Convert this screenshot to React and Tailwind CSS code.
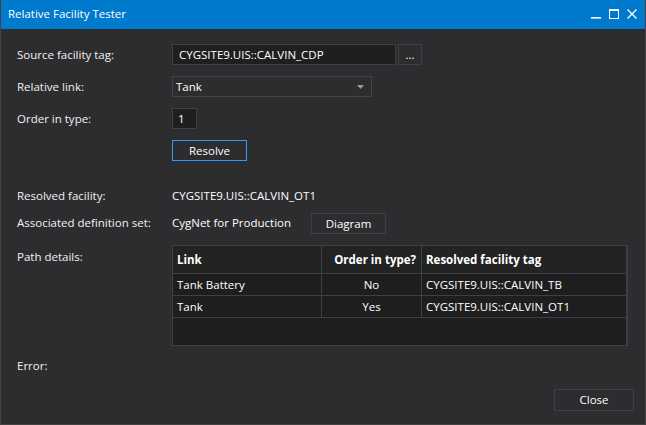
import React from "react";

const font = { fontFamily: '"Open Sans", "Noto Sans", sans-serif' };

export default function App() {
  return (
    <div
      className="w-[646px] h-[425px] bg-[#2d2d30] text-[#f1f1f1] text-[11.5px] flex flex-col border border-t-0 border-[#434346] overflow-hidden"
      style={font}
    >
      {/* Title bar */}
      <div className="h-[29px] shrink-0 bg-[#007acc] flex items-center pl-[8px] pr-[9px] -mx-px">
        <span className="text-white text-[11.5px] leading-none pb-[2px]">Relative Facility Tester</span>
        <div className="ml-auto flex items-center gap-[8px] pb-[1px]">
          <svg width="10" height="10" viewBox="0 0 10 10">
            <rect x="0" y="8" width="10" height="1.6" fill="white" />
          </svg>
          <svg width="10" height="10" viewBox="0 0 10 10">
            <rect x="0.5" y="0.5" width="9" height="9" fill="none" stroke="white" strokeWidth="1" />
            <rect x="0" y="0" width="10" height="2" fill="white" />
          </svg>
          <svg width="10" height="10" viewBox="0 0 10 10">
            <path d="M0.5 0.5 L9.5 9.5 M9.5 0.5 L0.5 9.5" stroke="white" strokeWidth="1.3" />
          </svg>
        </div>
      </div>

      <div className="flex flex-col pl-[16px] pr-[17px] pt-[15px] flex-1">
        {/* Source facility tag */}
        <div className="flex items-center h-[21px]">
          <div className="w-[155px] shrink-0">Source facility tag:</div>
          <div className="w-[224px] h-[21px] bg-[#1f1f1f] border border-[#3f3f46] flex items-center px-[6px] text-white">
            CYGSITE9.UIS::CALVIN_CDP
          </div>
          <div className="w-[24px] h-[21px] ml-[2px] border border-[#3f3f46] flex items-center justify-center text-white leading-none pt-[1px]">
            ...
          </div>
        </div>

        {/* Relative link */}
        <div className="flex items-center h-[21px] mt-[11px]">
          <div className="w-[155px] shrink-0">Relative link:</div>
          <div className="w-[200px] h-[21px] bg-[#2d2d30] border border-[#434346] flex items-center pl-[3px] pr-[7px] text-white">
            <span>Tank</span>
            <svg className="ml-auto" width="7" height="4" viewBox="0 0 7 4">
              <path d="M0 0 L7 0 L3.5 4 Z" fill="#999999" />
            </svg>
          </div>
        </div>

        {/* Order in type */}
        <div className="flex items-center h-[21px] mt-[11px]">
          <div className="w-[155px] shrink-0">Order in type:</div>
          <div className="w-[25px] h-[21px] bg-[#1f1f1f] border border-[#3f3f46] flex items-center px-[5px] text-white">
            1
          </div>
        </div>

        {/* Resolve */}
        <div className="flex items-center h-[21px] mt-[11px]">
          <div className="w-[155px] shrink-0"></div>
          <div className="w-[75px] h-[21px] border border-[#3399ff] flex items-center justify-center text-white">
            Resolve
          </div>
        </div>

        {/* Resolved facility */}
        <div className="flex items-center h-[20px] mt-[25px]">
          <div className="w-[155px] shrink-0">Resolved facility:</div>
          <div className="text-white">CYGSITE9.UIS::CALVIN_OT1</div>
        </div>

        {/* Associated definition set */}
        <div className="flex items-start h-[21px] mt-[7px]">
          <div className="w-[155px] shrink-0 pt-[1px]">Associated definition set:</div>
          <div className="w-[139px] shrink-0 text-white pt-[1px]">CygNet for Production</div>
          <div className="w-[75px] h-[21px] border border-[#3f3f46] flex items-center justify-center text-white">
            Diagram
          </div>
        </div>

        {/* Path details */}
        <div className="flex items-start mt-[11px]">
          <div className="w-[155px] shrink-0 pt-[3px]">Path details:</div>
          <div className="w-[457px] h-[101px] bg-[#1e1e1e] border border-[#3f3f46] border-r-[2px] flex flex-col">
            <div className="flex h-[28px] shrink-0 bg-[#232323] border-b border-[#3f3f46] font-bold text-white">
              <div className="w-[149px] flex items-center pl-[4px] border-r border-[#3f3f46]">Link</div>
              <div className="w-[100px] flex items-center justify-end pr-[5px] border-r border-[#3f3f46]">Order in type?</div>
              <div className="flex-1 flex items-center pl-[4px]">Resolved facility tag</div>
            </div>
            <div className="flex h-[22px] shrink-0 border-b border-[#3f3f46] text-white">
              <div className="w-[149px] flex items-center pl-[4px] border-r border-[#3f3f46]">Tank Battery</div>
              <div className="w-[100px] flex items-center justify-center border-r border-[#3f3f46]">No</div>
              <div className="flex-1 flex items-center pl-[4px]">CYGSITE9.UIS::CALVIN_TB</div>
            </div>
            <div className="flex h-[22px] shrink-0 border-b border-[#3f3f46] text-white">
              <div className="w-[149px] flex items-center pl-[4px] border-r border-[#3f3f46]">Tank</div>
              <div className="w-[100px] flex items-center justify-center border-r border-[#3f3f46]">Yes</div>
              <div className="flex-1 flex items-center pl-[4px]">CYGSITE9.UIS::CALVIN_OT1</div>
            </div>
          </div>
        </div>

        {/* Error */}
        <div className="mt-[12px] h-[16px] flex items-center">Error:</div>

        {/* Close */}
        <div className="flex justify-end mt-[15px]">
          <div className="w-[80px] h-[22px] border border-[#3f3f46] flex items-center justify-center text-white mr-[-6px]">
            Close
          </div>
        </div>
      </div>
    </div>
  );
}
